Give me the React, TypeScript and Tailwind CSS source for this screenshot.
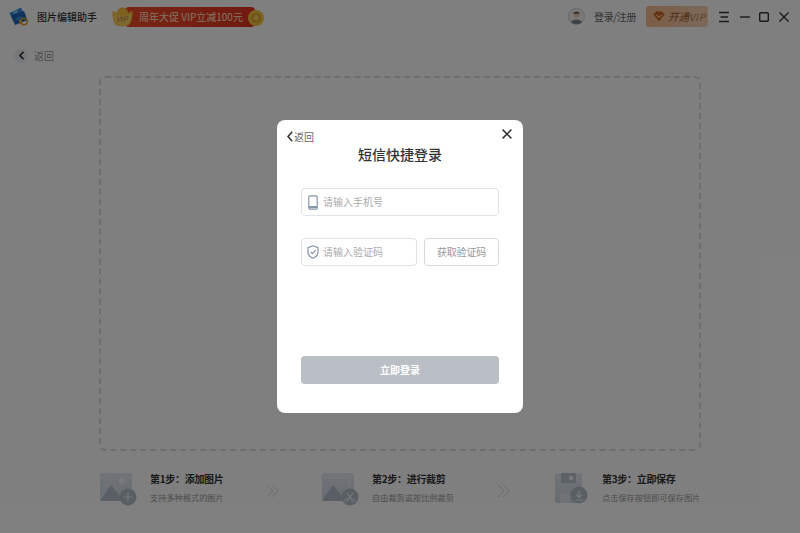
import { ChevronLeft } from "lucide-react";

const font = { fontFamily: '"Noto Sans CJK SC", "Liberation Sans", sans-serif' };

function Logo() {
  return (
    <svg width="20" height="19" viewBox="0 0 20 19">
      <path d="M0.5 6 L12 0.5 L16 9 L4 14 Z" fill="#3b8fe0" />
      <path d="M2 8 L15 4 L18.5 13 L6 18 Z" fill="#1f66bb" />
      <path d="M4 4.5 L8 3 L9 5.5 L5 7 Z" fill="#7cc8f0" />
      <path d="M7 11 L12 9 L13 12 L8 14 Z" fill="#3b8fe0" />
      <circle cx="15" cy="14.5" r="3.2" fill="none" stroke="#e0a030" strokeWidth="1.6" />
      <rect x="10" y="13" width="3" height="4" fill="#e0a030" />
    </svg>
  );
}

function Avatar() {
  return (
    <svg width="17" height="17" viewBox="0 0 17 17">
      <circle cx="8.5" cy="8.5" r="8" fill="#f2f2f2" stroke="#c4c4c4" strokeWidth="0.8" />
      <circle cx="8.5" cy="6.6" r="3" fill="#e8c9b4" />
      <path d="M5.5 6 C5.5 3 11.5 3 11.5 6 C10 5 7 5 5.5 6 Z" fill="#3a3a3a" />
      <path d="M3 14.6 C4 10.6 13 10.6 14 14.6 C11 16.8 6 16.8 3 14.6 Z" fill="#7b8690" />
    </svg>
  );
}

function Ingot() {
  return (
    <svg width="21" height="20" viewBox="0 0 21 20" className="absolute left-0 top-[1px]">
      <path
        d="M0.5 4 L5 6 C5 3 7 0.5 10.5 0.5 C14 0.5 16 3 16 6 L20.5 4 C20.5 10 20 15 17 18 C15 19.5 6 19.5 4 18 C1 15 0.5 10 0.5 4 Z"
        fill="#f8c13c"
      />
      <path d="M2 7 C6 9.5 15 9.5 19 7 C18.5 12 18 15 16 17 C13 18.5 8 18.5 5 17 C3 15 2.5 12 2 7 Z" fill="#fbd566" />
    </svg>
  );
}

function Coin() {
  return (
    <svg width="16" height="16" viewBox="0 0 16 16" className="absolute left-[136px] top-[4px]">
      <circle cx="8" cy="8" r="8" fill="#f6c744" />
      <circle cx="8" cy="8" r="5" fill="#e3a52a" />
      <path d="M8 4.5 L11 8 L8 11.5 L5 8 Z" fill="#f8d564" />
    </svg>
  );
}

function StepIcon({ kind }: { kind: "add" | "crop" | "save" }) {
  const w = kind === "save" ? 35 : 38;
  return (
    <svg width={w} height="34" viewBox={`0 0 ${w} 34`} className="mt-px shrink-0">
      <defs>
        <linearGradient id={`g-${kind}`} x1="0" y1="0" x2="0" y2="1">
          <stop offset="0" stopColor="#e3eaf1" />
          <stop offset="1" stopColor="#ced8e1" />
        </linearGradient>
      </defs>
      {kind === "save" ? (
        <>
          <rect x="0" y="0" width="27" height="30" rx="2" fill={`url(#g-${kind})`} />
          <rect x="6" y="0" width="15" height="10" rx="1" fill="#b9c4cf" />
          <rect x="14" y="3" width="4" height="4" fill="#eef2f6" />
          <rect x="5" y="20" width="10" height="10" fill="#dfe6ec" />
        </>
      ) : (
        <>
          <rect x="0" y="0" width="32" height="28" rx="2" fill={`url(#g-${kind})`} />
          <path d="M0 28 L11 12 L24 28 Z" fill="#b3bfcb" />
          {kind === "add" && <circle cx="22" cy="8" r="3" fill="#eef2f6" />}
          {kind === "crop" && (
            <path d="M2 5 H27 V20" fill="none" stroke="#f4f7f9" strokeWidth="1" strokeDasharray="3 1.5" />
          )}
        </>
      )}
      <circle cx={kind === "save" ? 24 : 28} cy={kind === "save" ? 22 : 24} r="8.5" fill="#b3bec9" />
      {kind === "add" && <path d="M28 19.5 V28.5 M23.5 24 H32.5" stroke="#eef2f6" strokeWidth="1.2" />}
      {kind === "crop" && (
        <>
          <path d="M24.5 19.5 L30.5 27 M31.5 19.5 L25.5 27" stroke="#eef2f6" strokeWidth="1.2" />
          <circle cx="24.5" cy="27.5" r="1.5" fill="none" stroke="#eef2f6" />
          <circle cx="31.5" cy="27.5" r="1.5" fill="none" stroke="#eef2f6" />
        </>
      )}
      {kind === "save" && (
        <path d="M24 17.5 V24 M21 21.5 L24 24.5 L27 21.5 M20 27 H28" fill="none" stroke="#eef2f6" strokeWidth="1.2" />
      )}
    </svg>
  );
}

function Arrows() {
  return (
    <svg width="14" height="14" viewBox="0 0 14 14" fill="none" stroke="#d3dae0" strokeWidth="1" className="mt-[12px] shrink-0">
      <path d="M1 1 L7 7 L1 13" />
      <path d="M6 1 L12 7 L6 13" />
    </svg>
  );
}

function Step({ kind, title, desc }: { kind: "add" | "crop" | "save"; title: string; desc: string }) {
  return (
    <div className="flex items-start gap-[12px]">
      <StepIcon kind={kind} />
      <div className="flex flex-col gap-[5px]">
        <span className="text-[10px] leading-[14px] font-bold tracking-[-0.3px] whitespace-nowrap text-[#333]">{title}</span>
        <span className="text-[8.2px] leading-[13px] whitespace-nowrap text-[#999]">{desc}</span>
      </div>
    </div>
  );
}

export default function App() {
  return (
    <div className="relative h-[533px] w-[800px] overflow-hidden bg-white" style={font}>
      <header className="flex h-[33px] items-center justify-between pl-[9px] pr-[10px]">
        <div className="flex items-center">
          <Logo />
          <span className="ml-[8px] text-[10px] font-medium text-[#333]">图片编辑助手</span>
          <div className="relative ml-[15px] flex h-[21px] w-[152px] items-center">
            <div className="ml-[13px] flex h-[20px] w-[130px] items-center rounded-[4px] bg-gradient-to-r from-[#f24c2a] to-[#e2321f] pl-[14px] text-[10px] whitespace-nowrap text-[#ffe9cf]">
              周年大促 VIP立减100元
            </div>
            <Ingot />
            <span className="absolute left-[4px] top-[7px] text-[7.5px] leading-[12px] italic text-[#b5651d]">VIP</span>
            <Coin />
          </div>
        </div>
        <div className="flex items-center">
          <Avatar />
          <span className="ml-[9px] text-[10px] tracking-[-0.4px] text-[#666]">登录/注册</span>
          <div className="ml-[10px] flex h-[21px] w-[62px] items-center rounded-[3px] bg-gradient-to-r from-[#f6bb90] to-[#f8d2b4] pl-[7px] text-[10.5px] whitespace-nowrap italic text-[#a15c24]">
            <svg width="12" height="11" viewBox="0 0 12 11" className="shrink-0">
              <path d="M0.5 3.5 L3.2 0.5 H8.8 L11.5 3.5 L6 10.5 Z" fill="#c8641e" />
              <path d="M3.3 3.6 L6 6.4 L8.7 3.6" fill="none" stroke="#f8c9a4" strokeWidth="1.1" />
            </svg>
            <span className="ml-[3px]">开通</span>
            <span className="text-[10px] tracking-[0.6px] opacity-70">VIP</span>
          </div>
          <div className="ml-[10px] flex items-center gap-[8px] text-[#333]">
            <svg width="12" height="12" viewBox="0 0 12 12" fill="none" stroke="currentColor" strokeWidth="1.4">
              <path d="M1 1.5 H11 M2.5 6 H10 M1 10.5 H11" />
            </svg>
            <svg width="12" height="12" viewBox="0 0 12 12" fill="none" stroke="currentColor" strokeWidth="1.4">
              <path d="M2 6 H12" />
            </svg>
            <svg width="12" height="12" viewBox="0 0 12 12" fill="none" stroke="currentColor" strokeWidth="1.4">
              <rect x="1.7" y="1.7" width="8.6" height="8.6" rx="1" />
            </svg>
            <svg width="12" height="12" viewBox="0 0 12 12" fill="none" stroke="currentColor" strokeWidth="1.4">
              <path d="M1.5 1.5 L10.5 10.5 M10.5 1.5 L1.5 10.5" />
            </svg>
          </div>
        </div>
      </header>

      <div className="flex h-[43px] items-center pb-[2px] pl-[14px] pt-[4px]">
        <div className="flex h-[14px] w-[14px] items-center justify-center rounded-full bg-[#eef0f3]">
          <ChevronLeft size={13} strokeWidth={2.8} className="text-[#222]" />
        </div>
        <span className="ml-[6px] text-[10px] text-[#999]">返回</span>
      </div>

      <main className="mx-[99px] h-[375px] rounded-[6px] border-2 border-dashed border-[#d9dcdf]" />

      <div className="ml-[100px] mt-[21px] flex items-start">
        <div className="w-[124px] shrink-0">
          <Step kind="add" title="第1步：添加图片" desc="支持多种格式的图片" />
        </div>
        <div className="ml-[42px]">
          <Arrows />
        </div>
        <div className="ml-[42px] w-[133px] shrink-0">
          <Step kind="crop" title="第2步：进行裁剪" desc="自由裁剪或按比例裁剪" />
        </div>
        <div className="ml-[42px]">
          <Arrows />
        </div>
        <div className="ml-[44px] shrink-0">
          <Step kind="save" title="第3步：立即保存" desc="点击保存按钮即可保存图片" />
        </div>
      </div>

      <div className="absolute inset-0 flex items-start justify-center bg-black/50 pt-[120px]">
        <div className="relative flex h-[293px] w-[246px] flex-col rounded-[8px] bg-white px-[24px]">
          <div className="absolute left-[10px] top-[9px] flex items-center gap-[1px] text-[10px] leading-[15px] text-[#666]">
            <svg width="6" height="11" viewBox="0 0 6 11" fill="none" stroke="#333" strokeWidth="1.6">
              <path d="M5.2 0.8 L1 5.5 L5.2 10.2" />
            </svg>
            <span>返回</span>
          </div>
          <svg
            width="10"
            height="10"
            viewBox="0 0 10 10"
            fill="none"
            stroke="#333"
            strokeWidth="1.5"
            className="absolute right-[11px] top-[9px]"
          >
            <path d="M0.6 0.6 L9.4 9.4 M9.4 0.6 L0.6 9.4" />
          </svg>
          <h1 className="mt-[24px] text-center text-[14px] leading-[21px] font-medium text-[#333]">短信快捷登录</h1>

          <div className="mt-[23px] flex h-[28px] items-center rounded-[4px] border border-[#dfe3e8] pl-[6px]">
            <svg width="10" height="15" viewBox="0 0 10 15" fill="none" stroke="#8496a8" strokeWidth="1.2">
              <rect x="0.8" y="0.8" width="8.4" height="13.4" rx="1.2" />
              <path d="M1 12 H9" strokeWidth="2" />
            </svg>
            <span className="ml-[5px] pb-px text-[10px] text-[#aaa]">请输入手机号</span>
          </div>

          <div className="mt-[22px] flex gap-[7px]">
            <div className="flex h-[28px] w-[116px] items-center rounded-[4px] border border-[#dfe3e8] pl-[5px]">
              <svg width="12" height="14" viewBox="0 0 12 14" fill="none" stroke="#8496a8" strokeWidth="1.2">
                <path d="M6 0.8 L11 2.6 V7 C11 10 8.5 12.2 6 13.2 C3.5 12.2 1 10 1 7 V2.6 Z" />
                <path d="M3.6 6.8 L5.4 8.6 L8.6 5.2" />
              </svg>
              <span className="ml-[4px] pb-px text-[10px] text-[#aaa]">请输入验证码</span>
            </div>
            <div className="flex h-[28px] w-[75px] items-center justify-center rounded-[4px] border border-[#d5d9de] pb-px text-[10px] tracking-[-0.2px] text-[#999]">
              获取验证码
            </div>
          </div>

          <button
            type="button"
            className="mt-[90px] h-[28px] rounded-[4px] bg-[#babec5] pb-[2px] text-[10px] font-bold text-white"
          >
            立即登录
          </button>
        </div>
      </div>
    </div>
  );
}
